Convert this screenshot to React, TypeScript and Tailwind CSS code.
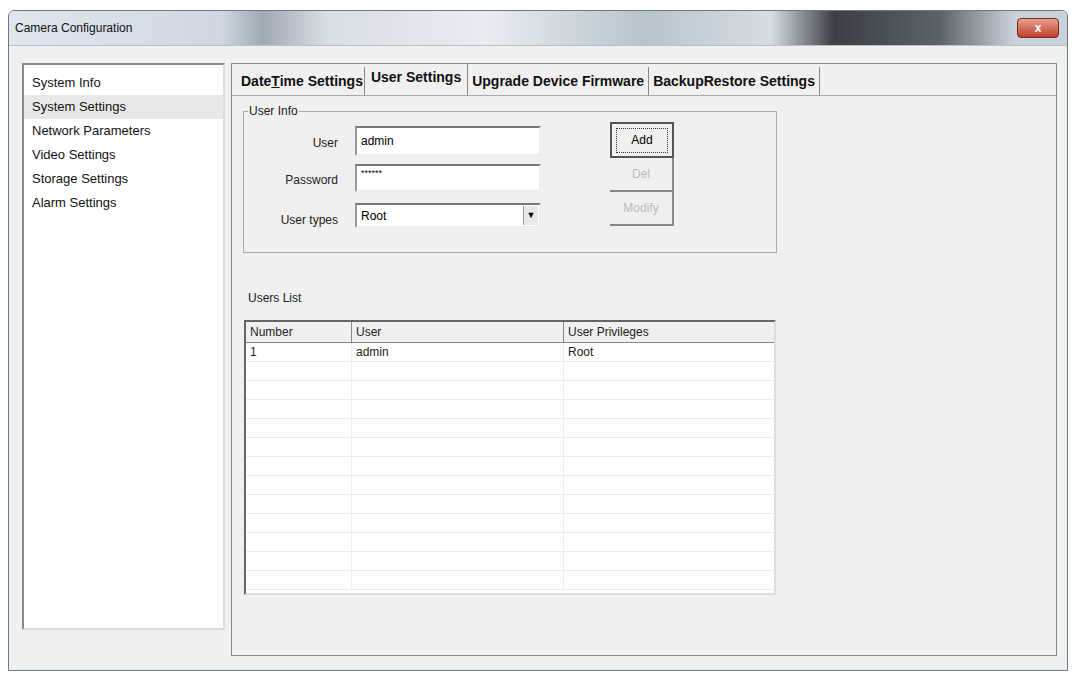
import React from "react";

const F = { fontFamily: '"Liberation Sans",Arial,sans-serif' };

export default function App() {
  const rows = Array.from({ length: 13 });
  return (
    <div className="w-[1076px] h-[679px] bg-white flex flex-col pt-[10px] px-[8px] pb-[8px]" style={F}>
      <div className="flex-1 flex flex-col border border-[#6b7a8a] rounded-t-[6px] overflow-hidden bg-[#f0f0f0]">
        <div className="h-[34px] shrink-0 flex items-center justify-between pl-[6px] pr-[8px] bg-[linear-gradient(90deg,#dfe6ee_0%,#cfd8e2_20%,#9fa9b4_24%,#d8dee5_30%,#e8edf2_45%,#b8c4cc_60%,#d6dde4_72%,#3a3f45_78%,#5b626a_88%,#c9d2da_95%)]">
          <span className="text-[12px] text-[#111]">Camera Configuration</span>
          <div className="w-[42px] h-[20px] rounded-[4px] bg-[linear-gradient(#e8a090,#c0402c)] border border-[#7a2a20] text-white text-[12px] font-bold flex items-center justify-center">x</div>
        </div>
        <div className="flex-1 flex gap-[6px] pl-[13px] pr-[10px] pt-[17px] pb-[14px] border-t border-[#b8c0c8]">
          <div className="w-[203px] mb-[26px] bg-white border-2 border-t-[#888] border-l-[#888] border-r-[#ddd] border-b-[#ddd] pt-[6px] text-[13px] text-[#111]">
            <div className="px-[8px] h-[24px] leading-[24px]">System Info</div>
            <div className="px-[8px] h-[24px] leading-[24px] bg-[#e8e8e8]">System Settings</div>
            <div className="px-[8px] h-[24px] leading-[24px]">Network Parameters</div>
            <div className="px-[8px] h-[24px] leading-[24px]">Video Settings</div>
            <div className="px-[8px] h-[24px] leading-[24px]">Storage Settings</div>
            <div className="px-[8px] h-[24px] leading-[24px]">Alarm Settings</div>
          </div>
          <div className="flex-1 flex flex-col border border-[#888] bg-[#f0f0f0]">
            <div className="h-[32px] flex items-end pl-[8px] gap-0 text-[14px] font-bold text-[#111] border-b border-[#aaa]">
              <div className="px-[1px] h-[28px] leading-[28px] border-r border-[#888]">Date<span className="underline">T</span>ime Settings</div>
              <div className="px-[6px] h-[31px] leading-[26px] bg-[#f0f0f0] border-r border-[#888] font-semibold">User Settings</div>
              <div className="px-[4px] h-[28px] leading-[28px] border-r border-[#888]">Upgrade Device Firmware</div>
              <div className="px-[4px] h-[28px] leading-[28px] border-r border-[#888]">BackupRestore Settings</div>
            </div>
            <div className="pl-[11px] pt-[6px] w-[545px] flex flex-col">
              <fieldset className="border border-[#aaa] h-[151px] pl-[8px] pr-[8px] relative">
                <legend className="text-[12px] px-[1px] text-[#222] ml-[-4px]">User Info</legend>
                <div className="flex mt-[6px]">
                  <div className="w-[86px] flex flex-col items-end gap-[8px] text-[12px] text-[#222] pt-[8px]">
                    <div className="h-[29px]">User</div>
                    <div className="h-[29px]">Password</div>
                    <div className="h-[29px] pt-[3px]">User types</div>
                  </div>
                  <div className="ml-[17px] w-[186px] flex flex-col gap-[8px]">
                    <div className="h-[30px] bg-white border-2 border-t-[#777] border-l-[#999] border-r-[#eee] border-b-[#eee] text-[12px] px-[4px] leading-[26px]">admin</div>
                    <div className="h-[28px] bg-white border-2 border-t-[#777] border-l-[#999] border-r-[#eee] border-b-[#eee] text-[9px] px-[4px] leading-[14px]">******</div>
                    <div className="h-[25px] mt-[3px] bg-white border-2 border-t-[#777] border-l-[#999] border-r-[#eee] border-b-[#eee] text-[12px] pl-[4px] flex items-center justify-between">
                      <span>Root</span>
                      <span className="w-[15px] h-[19px] bg-[#e8e8e8] border-l border-[#999] text-[9px] flex items-center justify-center mr-[1px]">▼</span>
                    </div>
                  </div>
                  <div className="ml-[69px] w-[64px] flex flex-col text-[12px] -mt-[4px]">
                    <div className="h-[36px] border-2 border-[#555] bg-[#f0f0f0] flex items-center justify-center">
                      <div className="border border-dotted border-[#333] w-[52px] h-[25px] flex items-center justify-center">Add</div>
                    </div>
                    <div className="h-[34px] border-r-2 border-b-2 border-[#888] bg-[#f0f0f0] flex items-center justify-center text-[#bbb]">Del</div>
                    <div className="h-[34px] border-r-2 border-b-2 border-[#888] bg-[#f0f0f0] flex items-center justify-center text-[#bbb]">Modify</div>
                  </div>
                </div>
              </fieldset>
              <div className="mt-[36px] text-[12px] text-[#222] pl-[5px]">Users List</div>
              <div className="mt-[13px] ml-[1px] w-[532px] h-[275px] border-2 border-t-[#666] border-l-[#666] border-r-[#ddd] border-b-[#ddd] bg-white text-[12px] text-[#222]">
                <div className="flex h-[21px] bg-[#f0f0f0] border-b border-[#888]">
                  <div className="w-[106px] border-r border-[#888] pl-[4px] leading-[21px]">Number</div>
                  <div className="w-[212px] border-r border-[#888] pl-[4px] leading-[21px]">User</div>
                  <div className="flex-1 pl-[4px] leading-[21px]">User Privileges</div>
                </div>
                {rows.map((_, i) => (
                  <div key={i} className="flex h-[19px] border-b border-[#ececec]">
                    <div className="w-[106px] border-r border-[#ececec] pl-[4px] leading-[18px]">{i === 0 ? "1" : ""}</div>
                    <div className="w-[212px] border-r border-[#ececec] pl-[4px] leading-[18px]">{i === 0 ? "admin" : ""}</div>
                    <div className="flex-1 pl-[4px] leading-[18px]">{i === 0 ? "Root" : ""}</div>
                  </div>
                ))}
              </div>
            </div>
          </div>
        </div>
      </div>
    </div>
  );
}
